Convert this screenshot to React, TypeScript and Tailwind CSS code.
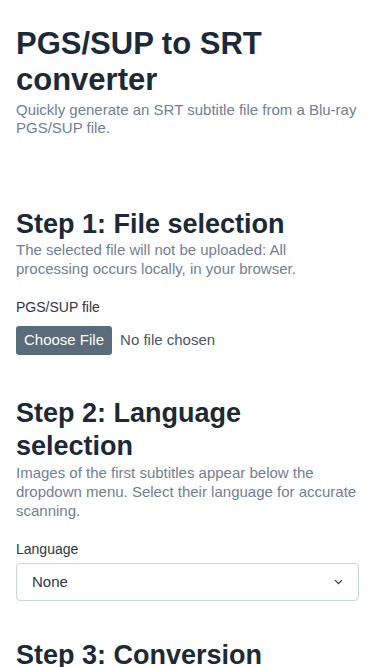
export default function App() {
  return (
    <div className="min-h-screen bg-white px-4 pt-[26px] font-['Liberation_Sans',Arial,sans-serif] text-[#1c2937]">
      <h1 className="text-[31px] font-bold leading-[36px]">PGS/SUP to SRT converter</h1>
      <p className="mt-[3px] text-[15px] leading-[18px] text-[#718096]">
        Quickly generate an SRT subtitle file from a Blu-ray PGS/SUP file.
      </p>

      {/* Step 1 */}
      <section className="mt-[71px]">
        <h2 className="text-[27px] font-bold leading-[32px]">Step 1: File selection</h2>
        <p className="text-[15px] leading-[19px] text-[#718096]">
          The selected file will not be uploaded: All processing occurs locally, in your browser.
        </p>
        <label className="mt-[20px] block text-[14px] leading-[18px] text-[#2d3748]">PGS/SUP file</label>
        <div className="mt-[10px] flex items-center gap-2">
          <button className="h-[29px] rounded-[3px] bg-[#5a6b79] px-[8px] text-[15px] text-white">
            Choose File
          </button>
          <span className="text-[15px] text-[#4a5568]">No file chosen</span>
        </div>
      </section>

      {/* Step 2 */}
      <section className="mt-[42px]">
        <h2 className="text-[27px] font-bold leading-[33px]">Step 2: Language selection</h2>
        <p className="text-[15px] leading-[19px] text-[#718096]">
          Images of the first subtitles appear below the dropdown menu. Select their language for accurate scanning.
        </p>
        <label className="mt-[20px] block text-[14px] leading-[18px] text-[#2d3748]">Language</label>
        <div className="mt-[5px] flex h-[38px] items-center justify-between rounded-[4px] border border-[#cbd5e0] pl-[15px] pr-[15px]">
          <span className="text-[15px] text-[#2d3748]">None</span>
          <svg width="9" height="6" viewBox="0 0 9 6" fill="none" stroke="#2d3748" strokeWidth="1.2">
            <path d="M1 1.2l3.5 3.5 3.5-3.5" />
          </svg>
        </div>
      </section>

      {/* Step 3 */}
      <section className="mt-[38px]">
        <h2 className="text-[27px] font-bold leading-[33px]">Step 3: Conversion</h2>
      </section>
    </div>
  );
}
